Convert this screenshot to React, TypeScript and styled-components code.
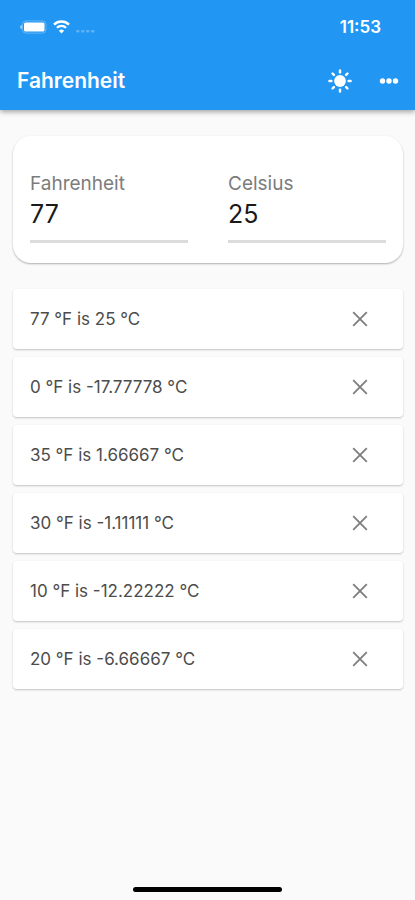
import React, { useState } from "react";
import styled, { createGlobalStyle } from "styled-components";

const GlobalStyle = createGlobalStyle`
  *, *::before, *::after { box-sizing: border-box; }
  body {
    margin: 0;
    background: #fafafa;
    font-family: Inter, "Liberation Sans", sans-serif;
    color: #212121;
  }
  button, input { font: inherit; }
`;

const Screen = styled.div`
  min-height: 100vh;
  display: flex;
  flex-direction: column;
`;

const Header = styled.header`
  background: #2196f3;
  color: #fff;
  box-shadow: 0 2px 5px rgba(0, 0, 0, 0.35);
`;

const StatusBar = styled.div`
  height: 52px;
  padding: 2px 34px 0 20px;
  display: flex;
  align-items: center;
  justify-content: space-between;
`;

const StatusIcons = styled.div`
  display: flex;
  align-items: center;
  gap: 6px;
`;

const Clock = styled.time`
  font-size: 17px;
  font-weight: 600;
  line-height: 20px;
`;

const AppBar = styled.div`
  height: 58px;
  padding: 0 12px 0 17px;
  display: flex;
  align-items: center;
`;

const Title = styled.h1`
  flex: 1;
  margin: 0;
  font-size: 21px;
  font-weight: 600;
  line-height: 28px;
`;

const Actions = styled.div`
  display: flex;
  gap: 23px;
`;

const IconButton = styled.button<{ $tone?: string }>`
  display: flex;
  align-items: center;
  justify-content: center;
  flex: none;
  height: 28px;
  padding: 0;
  border: 0;
  background: none;
  color: ${(p) => p.$tone ?? "#fff"};
  cursor: pointer;
`;

const Main = styled.main`
  flex: 1;
  padding: 26px 12px 24px 13px;
`;

const ConverterCard = styled.section`
  display: grid;
  grid-template-columns: 1fr 1fr;
  gap: 40px;
  padding: 36px 17px 20px;
  background: #fff;
  border-radius: 18px;
  box-shadow: 0 1px 2px rgba(0, 0, 0, 0.3);
`;

const Field = styled.label`
  display: flex;
  flex-direction: column;
  min-width: 0;
`;

const FieldLabel = styled.span`
  font-size: 19px;
  line-height: 24px;
  color: #7c7c7c;
`;

const FieldInput = styled.input`
  width: 100%;
  height: 47px;
  padding: 0 0 9px;
  border: 0;
  border-bottom: 3px solid #dcdcdc;
  border-radius: 0;
  outline: 0;
  background: none;
  color: #1a1a1a;
  font-size: 25px;
  line-height: 30px;
`;

const History = styled.ul`
  list-style: none;
  margin: 26px 0 0;
  padding: 0;
  display: grid;
  gap: 8px;
`;

const HistoryRow = styled.li`
  height: 60px;
  padding: 0 32px 0 17px;
  display: flex;
  align-items: center;
  justify-content: space-between;
  background: #fff;
  border-radius: 4px;
  box-shadow: 0 1px 2px rgba(0, 0, 0, 0.22);
  font-size: 17px;
  line-height: 24px;
  color: #4c4c4c;
`;

const Footer = styled.footer`
  display: flex;
  justify-content: center;
  padding-bottom: 8px;
`;

const HomeIndicator = styled.div`
  width: 36%;
  height: 5px;
  border-radius: 3px;
  background: #000;
`;

const BatteryIcon = () => (
  <svg width="27" height="14" viewBox="0 0 27 14" aria-label="Battery">
    <path d="M2 4.700v4.600C.7 8.900 0 8 0 7s.7-1.900 2-2.300z" fill="#fff" fillOpacity=".5" />
    <rect x="2.500" y=".9" width="23.500" height="12.200" rx="3.500" fill="none" stroke="#fff" strokeOpacity=".3" />
    <rect x="4" y="2.400" width="20.500" height="9.200" rx="1.500" fill="#fff" />
  </svg>
);

const WifiIcon = () => (
  <svg width="17" height="14" viewBox="0 0 17 14" fill="none" aria-label="Wi-Fi">
    <path d="M1 4.600a10.700 10.700 0 0 1 15 0" stroke="#fff" strokeWidth="2.500" />
    <path d="M3.900 7.700a6.500 6.500 0 0 1 9.200 0" stroke="#fff" strokeWidth="2.200" />
    <path d="M8.500 13.600L5.900 10.700a3.800 3.800 0 0 1 5.200 0z" fill="#fff" />
  </svg>
);

const SignalIcon = () => (
  <svg width="19" height="14" viewBox="0 0 19 14" fill="#fff" fillOpacity=".28" aria-label="No signal">
    {[0, 5, 10, 15].map((x) => (
      <rect key={x} x={x} y="10" width="3.500" height="2.600" rx="1" />
    ))}
  </svg>
);

const SunIcon = () => (
  <svg width="24" height="24" viewBox="0 0 24 24" aria-hidden="true">
    <circle cx="12" cy="12" r="5.900" fill="#fff" />
    {[0, 45, 90, 135, 180, 225, 270, 315].map((angle) => (
      <path
        key={angle}
        d="M12 1.400V3.400"
        stroke="#fff"
        strokeWidth="2.400"
        strokeLinecap="round"
        transform={`rotate(${angle} 12 12)`}
      />
    ))}
  </svg>
);

const MoreIcon = () => (
  <svg width="28" height="24" viewBox="0 0 28 24" fill="#fff" aria-hidden="true">
    <circle cx="7.500" cy="12" r="2.700" />
    <circle cx="14" cy="12" r="2.700" />
    <circle cx="20.500" cy="12" r="2.700" />
  </svg>
);

const CloseIcon = () => (
  <svg width="22" height="22" viewBox="0 0 22 22" aria-hidden="true">
    <path d="M4.200 4.200l13.600 13.600M17.800 4.200L4.200 17.800" stroke="currentColor" strokeWidth="1.900" />
  </svg>
);

const format = (value: number) => String(Number(value.toFixed(5)));

const initialHistory = [
  "77 °F is 25 °C",
  "0 °F is -17.77778 °C",
  "35 °F is 1.66667 °C",
  "30 °F is -1.11111 °C",
  "10 °F is -12.22222 °C",
  "20 °F is -6.66667 °C",
];

export default function App() {
  const [fahrenheit, setFahrenheit] = useState("77");
  const [celsius, setCelsius] = useState("25");
  const [history, setHistory] = useState(initialHistory);

  const changeFahrenheit = (text: string) => {
    setFahrenheit(text);
    const value = parseFloat(text);
    setCelsius(Number.isNaN(value) ? "" : format(((value - 32) * 5) / 9));
  };

  const changeCelsius = (text: string) => {
    setCelsius(text);
    const value = parseFloat(text);
    setFahrenheit(Number.isNaN(value) ? "" : format((value * 9) / 5 + 32));
  };

  return (
    <Screen>
      <GlobalStyle />
      <Header>
        <StatusBar>
          <StatusIcons>
            <BatteryIcon />
            <WifiIcon />
            <SignalIcon />
          </StatusIcons>
          <Clock>11:53</Clock>
        </StatusBar>
        <AppBar>
          <Title>Fahrenheit</Title>
          <Actions>
            <IconButton type="button" aria-label="Toggle theme">
              <SunIcon />
            </IconButton>
            <IconButton type="button" aria-label="More options">
              <MoreIcon />
            </IconButton>
          </Actions>
        </AppBar>
      </Header>
      <Main>
        <ConverterCard>
          <Field>
            <FieldLabel>Fahrenheit</FieldLabel>
            <FieldInput
              inputMode="decimal"
              value={fahrenheit}
              onChange={(e) => changeFahrenheit(e.target.value)}
            />
          </Field>
          <Field>
            <FieldLabel>Celsius</FieldLabel>
            <FieldInput
              inputMode="decimal"
              value={celsius}
              onChange={(e) => changeCelsius(e.target.value)}
            />
          </Field>
        </ConverterCard>
        <History>
          {history.map((entry) => (
            <HistoryRow key={entry}>
              <span>{entry}</span>
              <IconButton
                type="button"
                $tone="#808080"
                aria-label={`Remove ${entry}`}
                onClick={() => setHistory(history.filter((item) => item !== entry))}
              >
                <CloseIcon />
              </IconButton>
            </HistoryRow>
          ))}
        </History>
      </Main>
      <Footer>
        <HomeIndicator />
      </Footer>
    </Screen>
  );
}
